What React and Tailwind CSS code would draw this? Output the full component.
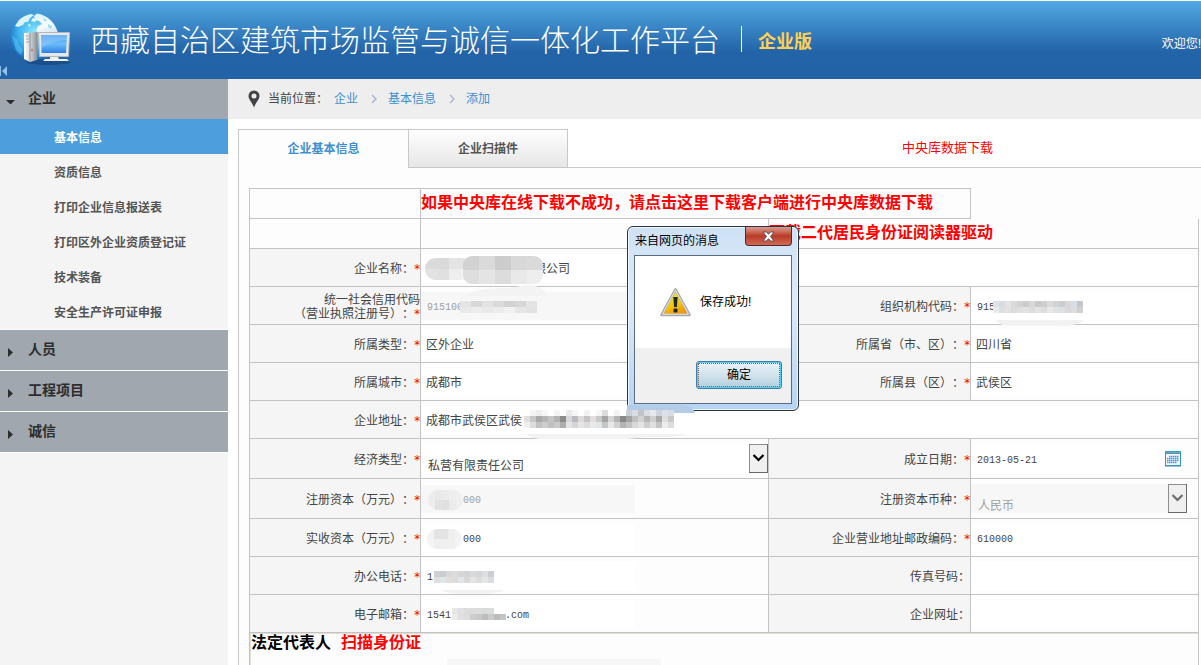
import React from "react";

const MENU = ["基本信息", "资质信息", "打印企业信息报送表", "打印区外企业资质登记证", "技术装备", "安全生产许可证申报"];
const GROUPS = ["人员", "工程项目", "诚信"];

function Logo() {
  return (
    <svg className="ml-2 mt-[9px] h-[56px] w-[64px] shrink-0" viewBox="0 0 64 56" aria-hidden="true">
      <defs>
        <radialGradient id="globe" cx="0.5" cy="0.4" r="0.6">
          <stop offset="0" stopColor="#8be6fc" />
          <stop offset="0.55" stopColor="#3fb4ee" />
          <stop offset="1" stopColor="#1268c0" />
        </radialGradient>
        <linearGradient id="land" x1="0" y1="0" x2="0.3" y2="1">
          <stop offset="0" stopColor="#d8f1fb" />
          <stop offset="0.5" stopColor="#f8fcfe" />
          <stop offset="1" stopColor="#c5dcec" />
        </linearGradient>
        <linearGradient id="screen" x1="0" y1="0" x2="0" y2="1">
          <stop offset="0" stopColor="#4f9df0" />
          <stop offset="0.5" stopColor="#6cbcfb" />
          <stop offset="1" stopColor="#2d80e2" />
        </linearGradient>
        <linearGradient id="tower" x1="0" x2="1">
          <stop offset="0" stopColor="#ffffff" />
          <stop offset="0.45" stopColor="#d5d9dc" />
          <stop offset="1" stopColor="#8b9299" />
        </linearGradient>
      </defs>
      <circle cx="26.500" cy="27" r="24" fill="url(#globe)" />
      <path d="M29 3.500 C39 5 47 12 50 23 L50 32 L40 32 L34 24 L28 21 L30 16 L34 14 L31 11 L27 10 L26 6 Z" fill="url(#land)" />
      <path d="M11 10 C14 7 18 5 23 4 L26 5 L22 8 L20 12 L17 12 L15 15 L10 17 L7 16 Z" fill="#dcf3fc" />
      <path d="M25 8 L29 9 L27 12 L23 11 Z M20 14 L23 15 L21 17 Z" fill="#e8f7fd" />
      <path d="M35 8 L39 10 L37 12 Z M40 14 L44 16 L43 19 L40 17 Z" fill="#9bdcf6" />
      <path d="M4 26 L9 29 L11 35 L15 39 L13 45 L8 40 Z" fill="#5cc3f2" opacity="0.6" />
      <ellipse cx="40" cy="52" rx="22" ry="3" fill="#123a6c" opacity="0.5" />
      <path d="M16 23 L29 22 L29 50 L22 52 L16 49 Z" fill="url(#tower)" />
      <path d="M22 23 V51 M29 23 V50" stroke="#8b9096" />
      <path d="M18 26 h3 M18 29 h3 M18 32 h3" stroke="#a2a7ac" />
      <circle cx="24" cy="40" r="1.200" fill="#d67b6a" />
      <path d="M30.500 22.500 H61.500 L60.500 46.500 H31.500 Z" fill="#e6e8ea" stroke="#b5babe" />
      <path d="M33 25 H59 L58 43 H33.500 Z" fill="url(#screen)" />
      <path d="M33 25 H59 V30 Q46 30 33 38 Z" fill="#a9d8fc" opacity="0.35" />
      <path d="M42 47 h8 l1 2 h8 l2 2 h-26 l2 -2 h5 Z" fill="#eef0f1" />
    </svg>
  );
}

/* Pixelated patch that hides part of a value. */
function Mosaic({ className, rows, size = 6, height = 6, radius = 0, id }) {
  const w = rows[0].length * size;
  const h = rows.length * height;
  return (
    <svg className={"pointer-events-none absolute z-20 " + className} width={w} height={h} viewBox={`0 0 ${w} ${h}`} aria-hidden="true">
      <clipPath id={id}>
        <rect width={w} height={h} rx={radius} />
      </clipPath>
      <g clipPath={`url(#${id})`} shapeRendering="crispEdges">
        {rows.map((row, y) =>
          row.map((c, x) => <rect key={x + "-" + y} x={x * size} y={y * height} width={size} height={height} fill={c} />)
        )}
      </g>
    </svg>
  );
}

function Smudge({ className, d, fill = "#f2f2f2" }) {
  return (
    <svg className={"pointer-events-none absolute z-20 h-[12px] w-[160px] " + className} viewBox="0 0 160 12" aria-hidden="true">
      <path d={d} fill={fill} />
    </svg>
  );
}

function Label({ id, children, required }) {
  return (
    <th scope="row" className="border border-[#c3c3c3] bg-[#f5f5f5] p-0 pt-[2px] text-right font-normal leading-[14px]">
      <label htmlFor={id}>
        {children}
        {required && (
          <span className="inline-flex h-[10px] w-[6px] items-center justify-center align-middle text-[#f00]">
            <span className="font-['DejaVu_Sans_Mono',monospace] text-[12px] leading-[14px]">*</span>
          </span>
        )}
      </label>
    </th>
  );
}

function Cell({ span, children }) {
  return (
    <td colSpan={span} className="border border-[#c3c3c3] p-0">
      <div className="relative flex h-[28px] items-center">{children}</div>
    </td>
  );
}

function Field({ id, value = "", wide, mono, disabled }) {
  return (
    <input
      id={id}
      type="text"
      defaultValue={value}
      disabled={disabled}
      className={
        "h-[28px] outline-none " +
        (wide ? "mr-[6px] flex-1 " : "w-[214px] ") +
        (mono ? "pl-[6px] pt-[3px] font-['Liberation_Mono',monospace] text-[10px] " : "pl-[5px] ") +
        (disabled ? "bg-[#f7f7f7] text-[#a0a0a0]" : "bg-white")
      }
    />
  );
}

function DropDown({ id, value, disabled }) {
  return (
    <>
      <select
        id={id}
        disabled={disabled}
        className={
          "h-[29px] flex-1 appearance-none pl-[7px] pt-[13px] outline-none " +
          (disabled ? "mr-[11px] bg-[#f7f7f7] text-[#a0a0a0]" : "bg-white")
        }
      >
        <option>{value}</option>
      </select>
      <svg
        className={"pointer-events-none absolute -top-px h-[29px] w-[19px] " + (disabled ? "right-[11px]" : "right-0")}
        viewBox="0 0 19 29"
        aria-hidden="true"
      >
        <rect x="0.5" y="0.5" width="18" height="28" fill="#f0f0f0" stroke="#8e8e8e" />
        <path d="M18.500 0 V28.500 H0" fill="none" stroke="#696969" />
        <path d="M4.500 11 L9.500 16 L14.500 11" fill="none" stroke={disabled ? "#6d6d6d" : "#000"} strokeWidth="2.200" />
      </svg>
    </>
  );
}

function Chevron() {
  return (
    <svg className="ml-[13px] mr-[11px] h-[10px] w-[6px]" viewBox="0 0 6 10" aria-hidden="true">
      <path d="M1 1 L5 5 L1 9" fill="none" stroke="#9db4d8" strokeWidth="1.300" />
    </svg>
  );
}

function Dialog() {
  return (
    <div
      role="dialog"
      aria-label="来自网页的消息"
      className="absolute left-[627px] top-[226px] z-10 w-[172px] rounded-[6px] border border-[#2b3440] bg-linear-to-b from-[#cfe1f5] via-[#dcebfb] via-40% to-[#b4d4f5] px-[6px] pb-[6px] text-black shadow-[inset_0_0_0_1px_#eef6ff]"
    >
      <div className="flex h-[28px] items-start justify-between">
        <h2 className="pl-px pt-[5px] text-[12px] leading-[18px]">来自网页的消息</h2>
        <button
          type="button"
          aria-label="关闭"
          className="flex h-[19px] w-[47px] items-center justify-center rounded-b-[4px] border border-t-0 border-[#4d2a2c] bg-linear-to-b from-[#dc9a90] via-[#b83a26] via-50% to-[#d06a55]"
        >
          <svg className="h-[11px] w-[13px]" viewBox="0 0 13 11" aria-hidden="true">
            <path d="M1 1 H4.500 L6.500 3.300 L8.500 1 H12 L8.500 5.500 L12 10 H8.500 L6.500 7.700 L4.500 10 H1 L4.500 5.500 Z" fill="#fff" stroke="#4c4c5c" strokeWidth="0.900" />
          </svg>
        </button>
      </div>
      <div className="border border-[#5d6b7c] bg-white">
        <div className="flex h-[92px] items-center pl-[25px]">
          <svg className="h-[29px] w-[31px]" viewBox="0 0 31 29" aria-hidden="true">
            <defs>
              <linearGradient id="warn" x1="0" y1="0" x2="0.4" y2="1">
                <stop offset="0" stopColor="#fff04a" />
                <stop offset="0.6" stopColor="#f5cf0a" />
                <stop offset="1" stopColor="#ee9a0c" />
              </linearGradient>
            </defs>
            <path d="M15.500 1.500 L29.500 27 H1.500 Z" fill="url(#warn)" stroke="#a9a9a9" strokeWidth="2.600" strokeLinejoin="round" />
            <path d="M15.500 2.200 L28.500 26.200 H2.500 Z" fill="none" stroke="#e6e6e6" strokeWidth="1" strokeLinejoin="round" />
            <path d="M13.300 9 H17.700 L16.900 19 H14.100 Z" fill="#20262e" />
            <rect x="13.500" y="20.500" width="4" height="4" rx="1" fill="#20262e" />
          </svg>
          <p className="pl-[9px] text-[12px]">保存成功!</p>
        </div>
        <div className="flex h-[55px] items-start justify-end bg-[#f0f0f0] pr-[9px] pt-[13px]">
          <button
            type="button"
            className="h-[28px] w-[86px] rounded-[3px] border border-[#3c7fb1] bg-linear-to-b from-[#eaf3f8] via-[#d3e3ec] via-50% to-[#b0cede] p-px text-[12px] shadow-[inset_0_0_0_1px_#48d0f5]"
          >
            <span className="flex h-full items-center justify-center border border-dotted border-[#7a6458]">确定</span>
          </button>
        </div>
      </div>
    </div>
  );
}

const G = ["#e4e4e4", "#dadada", "#d2d2d2", "#cccccc", "#d8d8d8"];
const H = ["#f1f1f1", "#ececec", "#e9e9e9", "#ebebeb", "#efefef"];
const BLUE = "#b4cbe8";

export default function App() {
  return (
    <div className="relative flex min-h-screen flex-col overflow-hidden bg-white pt-px font-['Liberation_Sans','Noto_Sans_CJK_SC',sans-serif] text-[12px] text-[#444] [text-spacing-trim:space-all]">
      <header className="relative flex h-[78px] items-start bg-linear-to-b from-[#52a9e3] via-[#2364a9] via-65% to-[#2262a6] text-white">
        <Logo />
        <h1 className="whitespace-nowrap pl-[18px] pt-[15px] font-['Noto_Sans_CJK_SC',sans-serif] text-[30px] font-light leading-[45px]">
          西藏自治区建筑市场监管与诚信一体化工作平台
        </h1>
        <span className="ml-[21px] mt-[25px] h-[26px] w-px bg-white" />
        <strong className="ml-4 mt-[27px] whitespace-nowrap text-[18px] leading-[28px] text-[#ffd052]">企业版</strong>
        <span className="ml-auto mt-[34px] whitespace-nowrap leading-[18px]">欢迎您!</span>
        <button type="button" aria-label="收起" className="absolute bottom-[3px] left-0 h-[10px] w-[8px]">
          <svg className="h-[10px] w-[8px]" viewBox="0 0 8 10" aria-hidden="true">
            <path d="M0 0 H1 V10 H0 Z M7 0 V10 L2 5 Z" fill="#8fc0ea" />
          </svg>
        </button>
      </header>

      <div className="flex flex-1">
        <nav className="w-[228px] shrink-0 bg-[#f4f4f4]">
          <button type="button" className="flex h-[40px] w-full items-center bg-[#a0a7ae] pl-[6px] text-[14px] font-bold text-[#2d2d2d]">
            <svg className="mt-[5px] h-[6px] w-[10px]" viewBox="0 0 10 6" aria-hidden="true">
              <path d="M0 1 H9 L5 5 H4 Z" fill="#2d2d2d" />
            </svg>
            <span className="pb-[2px] pl-[12px]">企业</span>
          </button>
          <ul>
            {MENU.map((m, i) => (
              <li key={m}>
                <a
                  href="#"
                  className={
                    "flex h-[35px] items-center pl-[54px] pt-[2px] font-bold " + (i === 0 ? "bg-[#4c9fdc] text-white" : "text-[#555]")
                  }
                >
                  {m}
                </a>
              </li>
            ))}
          </ul>
          {GROUPS.map((g) => (
            <button
              key={g}
              type="button"
              className="flex h-[41px] w-full items-center border-t border-white bg-[#a0a7ae] pl-[8px] text-[14px] font-bold text-[#2d2d2d]"
            >
              <svg className="mt-[5px] h-[10px] w-[5px]" viewBox="0 0 5 10" aria-hidden="true">
                <path d="M0 0 L5 4.500 L0 9 Z" fill="#2d2d2d" />
              </svg>
              <span className="pb-[2px] pl-[15px]">{g}</span>
            </button>
          ))}
          <div className="h-px bg-white" />
        </nav>

        <main className="flex min-w-0 flex-1 flex-col">
          <div className="flex h-[40px] items-center bg-[#eee] pl-[20px]">
            <svg className="h-[18px] w-[12px]" viewBox="0 0 12 18" aria-hidden="true">
              <path fillRule="evenodd" d="M6 0.500 A5.500 5.500 0 0 1 11.500 6 C11.500 9.500 8 12 6 17.500 C4 12 0.500 9.500 0.500 6 A5.500 5.500 0 0 1 6 0.500 Z M6 3.500 A2.500 2.500 0 1 0 6 8.500 A2.500 2.500 0 1 0 6 3.500 Z" fill="#444" />
            </svg>
            <span className="pl-[8px] pr-[6px]">当前位置：</span>
            <a href="#" className="text-[#3d8fd1]">企业</a>
            <Chevron />
            <a href="#" className="text-[#3d8fd1]">基本信息</a>
            <Chevron />
            <a href="#" className="text-[#3d8fd1]">添加</a>
          </div>

          <div className="ml-[10px] mt-[10px] flex flex-1 flex-col border-l border-[#c8c8c8] bg-[#fdfdfd]">
            <div className="flex h-[39px] bg-white font-bold">
              <a href="#" className="flex w-[169px] items-center justify-center border-t border-[#c8c8c8] bg-[#fdfdfd] text-[#3d8fd1]">
                企业基本信息
              </a>
              <a href="#" className="flex w-[160px] items-center justify-center border border-[#c8c8c8] bg-linear-to-b from-white to-[#e6e6e6] text-[#555]">
                企业扫描件
              </a>
              <div className="flex flex-1 items-center border-b border-[#c8c8c8]">
                <a href="#" className="ml-[334px] text-[13px] font-normal text-[#f00]">中央库数据下载</a>
              </div>
            </div>

            <div className="pl-[10px] pr-[2px] pt-[20px]">
              <table className="w-full table-fixed border-collapse">
                <colgroup>
                  <col className="w-[171px]" />
                  <col className="w-[348px]" />
                  <col className="w-[202px]" />
                  <col />
                </colgroup>
                <tbody>
                  <tr className="h-[30px]">
                    <td className="border border-[#c3c3c3] p-0" />
                    <td colSpan={2} className="border border-[#c3c3c3] p-0 pb-[2px] text-[16px] font-bold leading-[24px]">
                      <a href="#" className="whitespace-nowrap text-[#f00]">如果中央库在线下载不成功，请点击这里下载客户端进行中央库数据下载</a>
                    </td>
                  </tr>
                  <tr className="h-[30px]">
                    <td className="border border-[#c3c3c3] p-0" />
                    <td className="border border-[#c3c3c3] p-0" />
                    <td colSpan={2} className="border border-t-0 border-[#c3c3c3] p-0 pb-[2px] text-[16px] font-bold leading-[24px]">
                      <a href="#" className="whitespace-nowrap text-[#f00]">下载二代居民身份证阅读器驱动</a>
                    </td>
                  </tr>
                  <tr className="h-[38px]">
                    <Label id="name" required>企业名称：</Label>
                    <Cell span={3}>
                      <Field id="name" value="　　　　　　　　　限公司" wide />
                      <Mosaic id="m1" className="left-[4px] top-[4px]" size={12} height={11} radius={11} rows={[[G[1], G[1], G[0], G[0]], ["#e2e2e2", "#e0e0e0", "#eee", "#f3f3f3"]]} />
                      <Mosaic id="m2" className="left-[42px] top-[2px]" size={16} height={14} radius={9} rows={[[G[2], G[1], G[3], G[4], G[1]], ["#dedede", "#e4e4e4", "#dcdcdc", "#e9e9e9", "#eee"]]} />
                    </Cell>
                  </tr>
                  <tr className="h-[38px]">
                    <Label id="code" required>
                      统一社会信用代码
                      <br />
                      （营业执照注册号）：
                    </Label>
                    <Cell>
                      <Field id="code" value="915100" mono disabled />
                      <Smudge className="left-[44px] -top-[7px]" d="M0 11 Q12 2 44 3 L62 0 Q78 0 82 11 Z" fill="#f3f3f3" />
                      <Mosaic id="m3" className="left-[39px] top-[9px]" size={11} rows={[[G[0], G[4], "#e4e2e4", G[1], G[2], "#d4d7da", G[0]], [H[2], H[1], H[2], H[1], H[0], "#e6e6e6", "#e2e2e2"]]} />
                    </Cell>
                    <Label id="org" required>组织机构代码：</Label>
                    <Cell>
                      <Field id="org" value="915" mono wide />
                      <Mosaic id="m4" className="left-[22px] top-[9px]" rows={[["#dde1ea", "#d8dbe0", ...G, "#c9c9c9", "#d1cece", ...G.slice(1), "#d6dcea", "#c6c6c6"], ["#e8ebf0", "#dfdfdf", "#e2e2e2", "#dcdcdc", "#e2dede", "#dfe3e6", "#dcdcdc", "#e4e4e4", "#dddddd", "#e8e8e8", "#dce4ea", "#e0e0e0", "#d9d9d9", "#ddd", "#cfcfcf"]]} />
                      <Smudge className="left-[25px] top-[28px]" d="M0 0 H88 Q80 7 60 6 H14 Q4 6 0 0 Z" />
                    </Cell>
                  </tr>
                  <tr className="h-[38px]">
                    <Label id="type" required>所属类型：</Label>
                    <Cell><Field id="type" value="区外企业" /></Cell>
                    <Label id="province" required>所属省（市、区）：</Label>
                    <Cell><Field id="province" value="四川省" wide /></Cell>
                  </tr>
                  <tr className="h-[38px]">
                    <Label id="city" required>所属城市：</Label>
                    <Cell><Field id="city" value="成都市" /></Cell>
                    <Label id="county" required>所属县（区）：</Label>
                    <Cell><Field id="county" value="武侯区" wide /></Cell>
                  </tr>
                  <tr className="h-[38px]">
                    <Label id="address" required>企业地址：</Label>
                    <Cell span={3}>
                      <Field id="address" value="成都市武侯区武侯" wide />
                      <Smudge className="left-[206px] -top-px" d="M0 0 H55 Q66 1 68 8 H0 Z" fill={BLUE} />
                      <Mosaic
                        id="m5"
                        className="left-[103px] top-[4px]"
                        rows={[
                          ["#fff", "#f4f4f4", "#eee", "#f6f6f6", "#fff", "#f4f4f4", "#fff", "#eaeaea", "#f6f6f6", "#fff", "#f2f2f2", "#fff", "#f6f6f6", "#dcdcdc", "#fff", "#f3f3f3", "#fff", "#c9cfd6", "#d8dde4", "#bfc4c9", "#dadfe6", "#e6e9ee", "#cfd4da", "#dce1e8", "#d8dce2"],
                          ["#e0e0e0", "#c6c6c6", "#a9a9a9", "#b5b5b5", "#c4c4c4", "#b2b2b2", "#8c8c8c", "#d8d8d8", "#b8bcc0", "#dedada", "#c4c4c4", "#e6dedc", "#c9c9c9", "#a6a6a6", "#d4d4d4", "#b4b4b4", "#888", "#a2a2a2", "#c0c0c0", "#d6d2d0", "#b6b6b6", "#cfcfcf", "#a8a8a8", "#dedede", "#c8c8c8"],
                          ["#efefef", "#dcdcdc", "#c2c2c2", "#cdcdcd", "#c0c0c0", "#c9c9c9", "#adadad", "#e4e4e4", "#d6d6d6", "#e8e4e2", "#dcdcdc", "#e9e9e9", "#dfe5e8", "#c6c6c6", "#e8e8e8", "#d0d0d0", "#b4b4b4", "#c3c3c3", "#d8d8d8", "#e3e3e3", "#cecece", "#dfdfdf", "#c4c4c4", "#ececec", "#dcdcdc"],
                        ]}
                      />
                      <Smudge className="left-[106px] top-[28px]" d="M0 0 H160 Q150 4 120 3 L100 5 H12 Q3 4 0 0 Z" />
                    </Cell>
                  </tr>
                  <tr className="h-[40px]">
                    <Label id="economy" required>经济类型：</Label>
                    <Cell><DropDown id="economy" value="私营有限责任公司" /></Cell>
                    <Label id="founded" required>成立日期：</Label>
                    <Cell>
                      <Field id="founded" value="2013-05-21" mono wide />
                      <button type="button" aria-label="选择日期" className="mr-[17px] h-[16px] w-[16px]">
                        <svg className="h-[16px] w-[16px]" viewBox="0 0 16 16" aria-hidden="true">
                          <rect x="0.500" y="0.500" width="15" height="14" fill="#f4fafd" stroke="#2f93bd" />
                          <rect x="0" y="0" width="16" height="3" fill="#3f9cc0" />
                          <rect x="1" y="1" width="14" height="1" fill="#7aa4b3" />
                          <path d="M4 5.500 H14 M2 7.500 H14 M2 9.500 H14 M2 11.500 H12" stroke="#4b94d6" strokeWidth="1.500" strokeDasharray="1.500 0.500" />
                          <path d="M0 15.500 H16" stroke="#9cc4d4" />
                        </svg>
                      </button>
                    </Cell>
                  </tr>
                  <tr className="h-[40px]">
                    <Label id="capital" required>注册资本（万元）：</Label>
                    <Cell>
                      <Field id="capital" value="      000" mono disabled />
                      <Mosaic id="m6" className="left-[7px] top-[5px]" size={7} height={10} radius={10} rows={[["#ececec", "#e9e9e9", "#ebebeb", "#eee", "#f0f0f0"], ["#eee", "#e2e2e2", "#e0e0e0", "#ebebeb", "#efefef"]]} />
                    </Cell>
                    <Label id="currency" required>注册资本币种：</Label>
                    <Cell><DropDown id="currency" value="人民币" disabled /></Cell>
                  </tr>
                  <tr className="h-[38px]">
                    <Label id="paid" required>实收资本（万元）：</Label>
                    <Cell>
                      <Field id="paid" value="      000" mono />
                      <Mosaic id="m7" className="left-[6px] top-[5px]" size={7} height={10} radius={10} rows={[["#f2f2f2", "#e4e4e4", "#e4e4e4", "#eee", "#f2f2f2"], ["#f4f4f4", "#efefef", "#f0f0f0", "#f0f0f0", "#f4f4f4"]]} />
                    </Cell>
                    <Label id="zip" required>企业营业地址邮政编码：</Label>
                    <Cell><Field id="zip" value="610000" mono wide /></Cell>
                  </tr>
                  <tr className="h-[38px]">
                    <Label id="phone" required>办公电话：</Label>
                    <Cell>
                      <Field id="phone" value="1" mono />
                      <Mosaic id="m8" className="left-[13px] top-[9px]" rows={[["#ccd0d2", "#c9cdd0", "#d8d8d8", "#dcdcdc", "#d6d6d6", "#cfd4d6", "#dadada", "#d2d6d8", "#dedede", "#c9d0d4"], ["#dfdfdf", "#dde6e8", "#e2dede", "#dcdcdc", "#e0e6e8", "#d8d8d8", "#e4e4e4", "#dcdcdc", "#e6e6e6", "#d8dde2"]]} />
                      <Smudge className="left-[20px] top-[28px]" d="M0 0 H63 Q58 3 46 4 H18 Q4 3 0 0 Z" />
                    </Cell>
                    <Label id="fax">传真号码：</Label>
                    <Cell><Field id="fax" wide /></Cell>
                  </tr>
                  <tr className="h-[38px]">
                    <Label id="email" required>电子邮箱：</Label>
                    <Cell>
                      <Field id="email" value="1541         .com" mono />
                      <Mosaic id="m9" className="left-[31px] top-[8px]" rows={[["#e6e6e6", "#dfe1e2", "#dcdcdc", "#dadcdd", "#dcdcdc", "#dadada", "#d8dcdd", "#fff", "#fff"], ["#ececec", "#e4dfde", "#dcdcdc", "#d0cccc", "#c8c8c8", "#bdbdbd", "#cacaca", "#bcbcbc", "#c4c4c4"]]} />
                    </Cell>
                    <Label id="site">企业网址：</Label>
                    <Cell><Field id="site" wide /></Cell>
                  </tr>
                  <tr>
                    <td colSpan={4} className="border border-b-0 border-[#c3c3c3] p-0">
                      <div className="h-[32px] overflow-hidden border-l border-t border-[#e2e0d6]">
                        <div className="flex gap-[10px] text-[16px] font-bold leading-[18px]">
                          <h2 className="text-black">法定代表人</h2>
                          <a href="#" className="text-[#f00]">扫描身份证</a>
                        </div>
                        <input aria-label="法定代表人" disabled className="ml-[196px] mt-[7px] block h-[28px] w-[214px] bg-[#f7f7f7]" />
                      </div>
                    </td>
                  </tr>
                </tbody>
              </table>
            </div>
          </div>
        </main>
      </div>

      <Dialog />
    </div>
  );
}
